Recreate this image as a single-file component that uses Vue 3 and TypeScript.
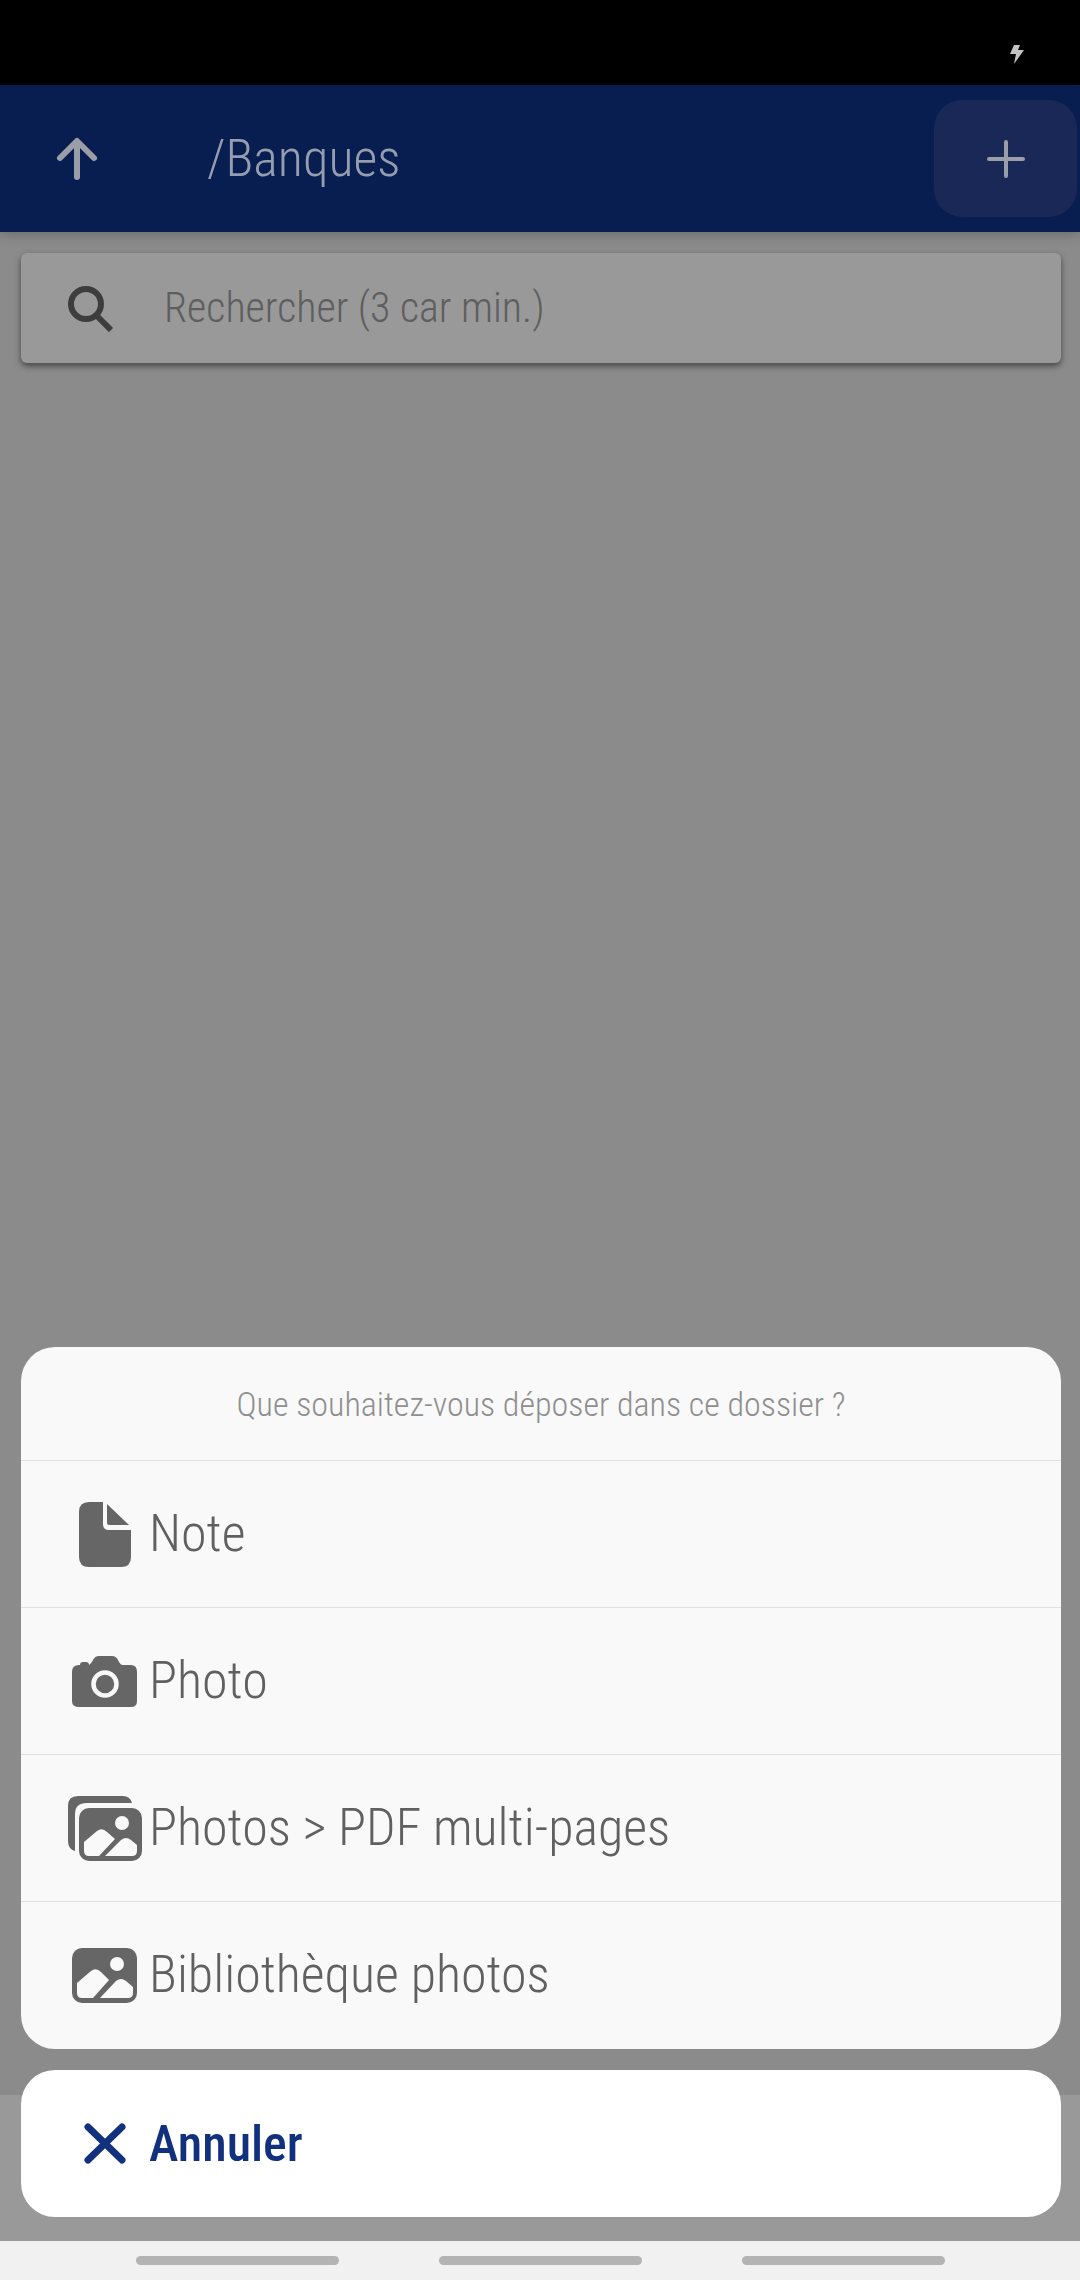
<script setup lang="ts">
import { ref } from 'vue'

type IconName = 'document' | 'camera' | 'images' | 'image'

interface Action {
  label: string
  icon: IconName
}

const query = ref('')

const actions: Action[] = [
  { label: 'Note', icon: 'document' },
  { label: 'Photo', icon: 'camera' },
  { label: 'Photos > PDF multi-pages', icon: 'images' },
  { label: 'Bibliothèque photos', icon: 'image' },
]
</script>

<template>
  <div class="screen">
    <div class="status-bar">
      <svg class="bolt" viewBox="0 0 14 20" aria-hidden="true">
        <path d="M4 1H10L8 6H14L4 20L6 10H0Z" />
      </svg>
    </div>

    <header class="toolbar">
      <button class="up" type="button" aria-label="Dossier parent">
        <svg viewBox="0 0 48 48" aria-hidden="true">
          <path d="M24 42V7M7 23L24 6L41 23" />
        </svg>
      </button>
      <h1 class="title">/Banques</h1>
      <button class="add" type="button" aria-label="Ajouter">
        <svg viewBox="0 0 48 48" aria-hidden="true">
          <path d="M24 7V41M7 24H41" />
        </svg>
      </button>
    </header>

    <main class="content">
      <label class="search">
        <svg class="search-icon" viewBox="0 0 48 48" aria-hidden="true">
          <circle cx="20" cy="20" r="15" />
          <path d="M30 31L45 46" />
        </svg>
        <input v-model="query" type="text" placeholder="Rechercher (3 car min.)" aria-label="Rechercher" />
      </label>
    </main>

    <div class="bottom-bar"></div>

    <div class="sheet" role="dialog" aria-labelledby="sheet-title">
      <div class="group">
        <h2 id="sheet-title" class="sheet-title">Que souhaitez-vous déposer dans ce dossier ?</h2>
        <button v-for="action in actions" :key="action.icon" class="action" type="button">
          <svg class="icon" viewBox="0 0 78 78" aria-hidden="true">
            <template v-if="action.icon === 'document'">
              <path d="M23 7H37V29Q37 35 43 35H65V62Q65 72 55 72H23Q13 72 13 62V17Q13 7 23 7Z" />
              <path d="M41 9L63 30H43Q41 30 41 28Z" />
            </template>
            <template v-else-if="action.icon === 'camera'">
              <path d="M13 23H14Q14 20 17 20H20Q23 20 23 23Q25 22 27 18Q29 14 33 14H46Q50 14 52 18Q54 23 57 23H65Q71 23 71 30V59Q71 65 65 65H13Q6 65 6 59V30Q6 23 13 23Z" />
              <circle class="lens" cx="39" cy="42" r="11.5" />
            </template>
            <template v-else-if="action.icon === 'images'">
              <path d="M9 62Q2 60 2 52V17Q2 7 12 7H57Q64 7 66 14H21Q9 14 9 25Z" />
              <rect x="13" y="19" width="63" height="53" rx="10" />
              <circle class="cut" cx="56" cy="34" r="7" />
              <path class="cut" d="M18 53L31 42Q36 38 41 43L49 50L33 67H23Q18 67 18 62Z" />
              <path class="cut" d="M39 67L55 51Q60 47 65 51L71 56V62Q71 67 66 67Z" />
            </template>
            <template v-else>
              <rect x="6" y="12" width="65" height="55" rx="10" />
              <circle class="cut" cx="51" cy="28" r="7" />
              <path class="cut" d="M11 47L25 35Q30 31 35 36L43 44L27 62H16Q11 62 11 57Z" />
              <path class="cut" d="M34 62L50 45Q55 41 60 45L67 51V57Q67 62 62 62Z" />
            </template>
          </svg>
          <span>{{ action.label }}</span>
        </button>
      </div>

      <button class="cancel" type="button">
        <svg class="icon" viewBox="0 0 78 78" aria-hidden="true">
          <path class="cross" d="M22 22L56 55M56 22L22 55" />
        </svg>
        <span>Annuler</span>
      </button>
    </div>

    <nav class="system-nav" aria-label="Navigation système">
      <span class="pill"></span>
      <span class="pill"></span>
      <span class="pill"></span>
    </nav>
  </div>
</template>

<style>
body {
  margin: 0;
}
</style>

<style scoped>
.screen {
  position: relative;
  display: flex;
  flex-direction: column;
  min-height: 100vh;
  background: #8b8b8b;
  font-family: "Roboto Condensed", "Liberation Sans Narrow", "Roboto", sans-serif;
  font-weight: 300;
}

button {
  margin: 0;
  padding: 0;
  border: 0;
  background: none;
  font: inherit;
  cursor: pointer;
}

svg {
  display: block;
  flex: none;
}

.status-bar {
  display: flex;
  justify-content: flex-end;
  align-items: flex-end;
  box-sizing: border-box;
  height: 85px;
  padding: 0 56px 21px 0;
  background: #000;
}

.bolt {
  width: 14px;
  height: 20px;
  fill: #c4c4c4;
}

.toolbar {
  display: flex;
  align-items: center;
  height: 147px;
  padding: 0 3px 0 53px;
  background: #081d50;
  box-shadow: 0 2px 12px rgba(0, 0, 0, 0.25);
}

.toolbar svg {
  width: 48px;
  height: 48px;
  fill: none;
  stroke: #999ea8;
  stroke-linecap: round;
  stroke-linejoin: round;
}

.up svg {
  stroke-width: 6;
}

.title {
  flex: 1;
  margin: 0 0 0 106px;
  color: #959db0;
  font-size: 52px;
  font-weight: 300;
  line-height: 60px;
}

.add {
  display: flex;
  align-items: center;
  justify-content: center;
  width: 143px;
  height: 117px;
  border-radius: 28px;
  background: #1a2858;
}

.add svg {
  stroke-width: 4;
}

.content {
  flex: 1;
  padding: 21px 19px 0 21px;
}

.search {
  display: flex;
  align-items: center;
  height: 110px;
  padding: 0 45px;
  border-radius: 6px;
  background: #999;
  box-shadow: 0 3px 6px rgba(0, 0, 0, 0.5);
}

.search-icon {
  width: 48px;
  height: 48px;
  fill: none;
  stroke: #3d3d3d;
  stroke-width: 6;
}

.search input {
  flex: 1;
  min-width: 0;
  margin: 0 0 0 50px;
  padding: 0;
  border: 0;
  outline: 0;
  background: none;
  color: #3d3d3d;
  font: inherit;
  font-size: 42px;
  line-height: 48px;
}

.search input::placeholder {
  color: #5e5e5e;
  opacity: 1;
}

.bottom-bar {
  height: 146px;
  background: #999;
}

.sheet {
  position: absolute;
  right: 19px;
  bottom: 63px;
  left: 21px;
  display: flex;
  flex-direction: column;
  gap: 21px;
}

.group,
.cancel {
  overflow: hidden;
  border-radius: 34px;
}

.group {
  padding-bottom: 1px;
  background: #f9f9f9;
}

.sheet-title {
  margin: 0;
  padding: 37px 0 36px;
  color: #8f8f8f;
  font-size: 34px;
  font-weight: 300;
  line-height: 40px;
  text-align: center;
}

.action,
.cancel {
  display: flex;
  align-items: center;
  gap: 5px;
  box-sizing: border-box;
  width: 100%;
  height: 147px;
  padding: 0 45px;
  font-size: 52px;
  line-height: 60px;
  text-align: left;
}

.action {
  border-top: 1px solid #e0e0e0;
  color: #606060;
}

.cancel {
  background: #fff;
  color: #11317f;
  font-size: 50px;
  font-weight: 500;
}

.icon {
  width: 78px;
  height: 78px;
  fill: #666;
}

.lens {
  fill: none;
  stroke: #f9f9f9;
  stroke-width: 4.5;
}

.cut {
  fill: #f9f9f9;
}

.cross {
  fill: none;
  stroke: #11317f;
  stroke-width: 7;
  stroke-linecap: round;
}

.system-nav {
  display: flex;
  align-items: center;
  justify-content: center;
  gap: 100px;
  height: 39px;
  background: #f1f1f1;
}

.pill {
  width: 203px;
  height: 9px;
  border-radius: 5px;
  background: #b3b3b3;
}
</style>
